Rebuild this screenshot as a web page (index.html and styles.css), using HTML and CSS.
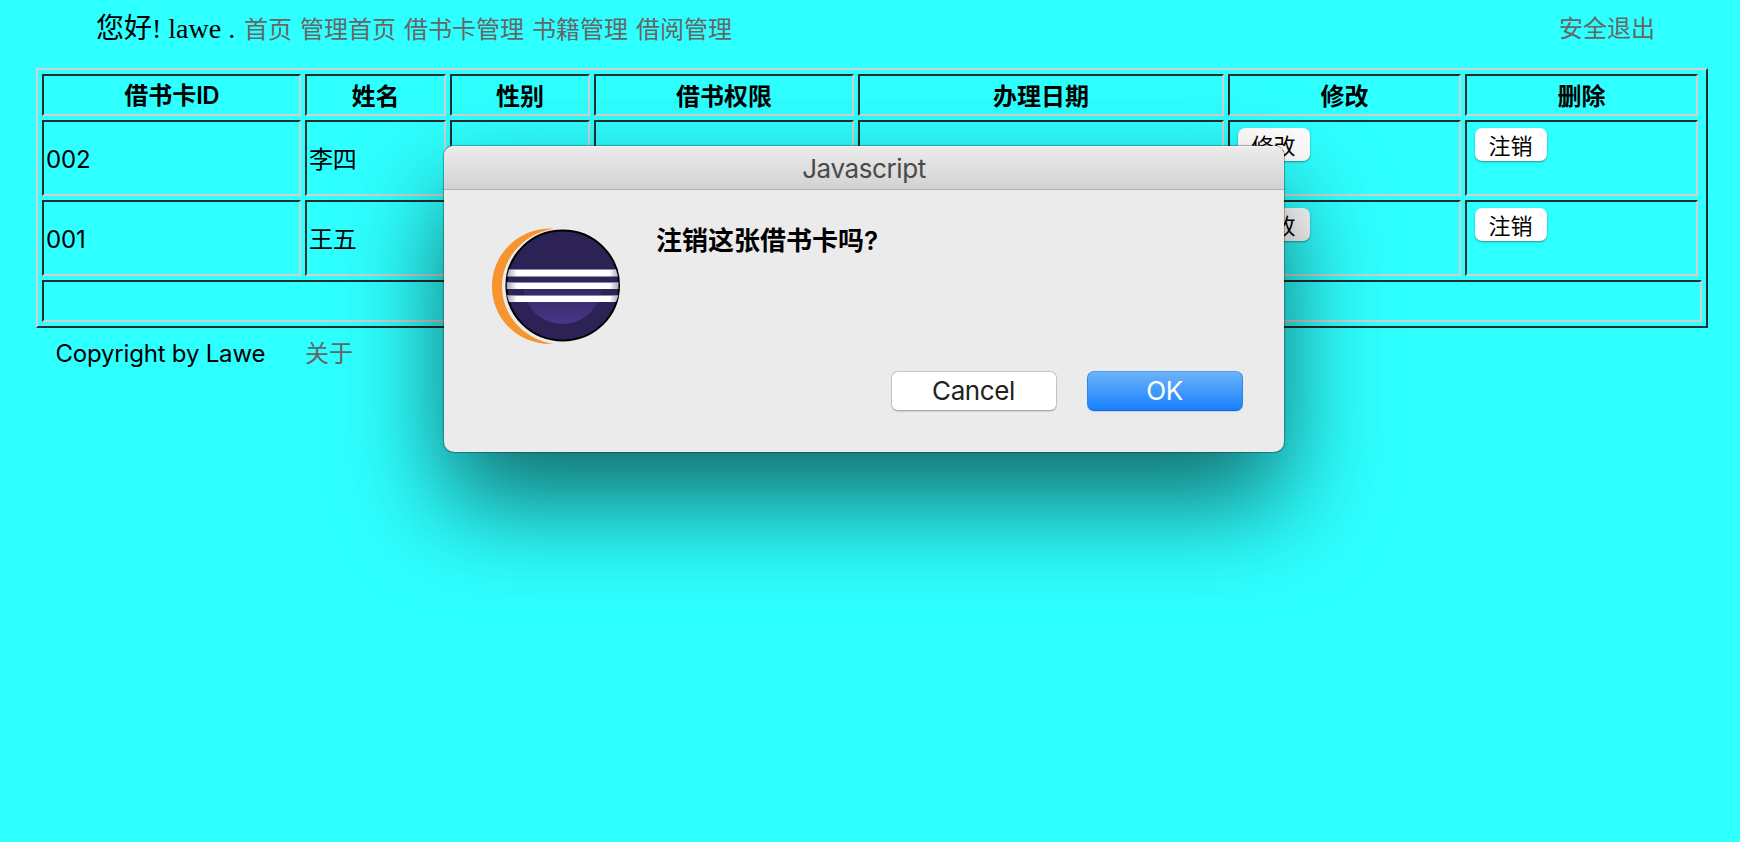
FILE: index.html
```html
<!DOCTYPE html>
<html lang="zh-CN">
<head>
<meta charset="utf-8">
<title>借书卡管理</title>
<link rel="stylesheet" href="styles.css">
</head>
<body>
<header class="topbar">
  <span class="greeting">您好! lawe .</span>
  <nav class="nav">
    <a>首页</a><a>管理首页</a><a>借书卡管理</a><a>书籍管理</a><a>借阅管理</a>
  </nav>
  <a class="logout">安全退出</a>
</header>
<main class="cards">
  <div class="cell head"><span>借书卡<span class="latin">ID</span></span></div><div class="cell head">姓名</div><div class="cell head">性别</div><div class="cell head">借书权限</div><div class="cell head">办理日期</div><div class="cell head">修改</div><div class="cell head">删除</div>
  <div class="cell">002</div><div class="cell">李四</div><div class="cell"></div><div class="cell"></div><div class="cell"></div><div class="cell action"><button class="btn">修改</button></div><div class="cell action"><button class="btn">注销</button></div>
  <div class="cell">001</div><div class="cell">王五</div><div class="cell"></div><div class="cell"></div><div class="cell"></div><div class="cell action"><button class="btn">修改</button></div><div class="cell action"><button class="btn">注销</button></div>
  <div class="cell pager"></div>
</main>
<footer class="footer"><span class="copyright">Copyright by Lawe</span><a>关于</a></footer>

<section class="dialog">
  <div class="title">Javascript</div>
  <div class="content">
    <svg class="logo" viewBox="0 0 130 118" width="130" height="118">
      <defs>
        <linearGradient id="inner" x1="0" y1="0" x2="0" y2="1"><stop offset="0.35" stop-color="#2c2255"/><stop offset="1" stop-color="#473788"/></linearGradient>
        <linearGradient id="bar" x1="0" x2="1"><stop offset="0" stop-color="#aaa3bd"/><stop offset="0.09" stop-color="#fff"/><stop offset="0.92" stop-color="#fff"/><stop offset="1" stop-color="#aaa3bd"/></linearGradient>
      </defs>
      <path d="M62 0.5C28-1.500 0 25 0 58.500S28 118 62 116C34 112 10 89 10 58.500S34 5 62 0.500Z" fill="#f7942d"/>
      <ellipse cx="70.700" cy="57.500" rx="56.300" ry="55" fill="#2c2255" stroke="#000" stroke-width="2"/>
      <circle cx="70.500" cy="56.500" r="39.500" fill="url(#inner)"/>
      <path d="M17 41.500H124L126 48.500H15ZM14.800 54.500H126.500V61H14.800ZM15 67.500H126.500L124 74H17Z" fill="url(#bar)"/>
      <path d="M17 41.500H124M15 54.500H126.500M15 67.500H126" stroke="#8f84ad" stroke-width="1"/>
    </svg>
    <p class="message">注销这张借书卡吗?</p>
  </div>
  <div class="buttons"><button class="cancel">Cancel</button><button class="ok">OK</button></div>
</section>
</body>
</html>
```
FILE: styles.css
```css
* { box-sizing: border-box; }
body {
  margin: 0;
  height: 842px;
  overflow: hidden;
  background: #2effff;
  color: #000;
  font: 24px/36px "Liberation Sans", "Noto Sans CJK SC", sans-serif;
}
a { color: #666; }
.topbar {
  display: flex;
  align-items: center;
  height: 68px;
  padding: 0 85px 9px 96px;
}
.greeting {
  width: 148px;
  padding-bottom: 2px;
  white-space: nowrap;
  font: 28px/36px "Liberation Serif", "Noto Sans CJK SC", serif;
}
.nav { display: flex; gap: 8px; }
.logout { margin-left: auto; padding-bottom: 2px; }
.cards {
  display: grid;
  grid-template-columns: 259px 141px 140px 260px 366px 233px 233px;
  grid-template-rows: 42px 76px 76px 42px;
  gap: 4px;
  width: 1672px;
  height: 260px;
  margin-left: 36px;
  padding: 4px;
  border: 2px solid;
  border-color: #d0d0d0 #2c2c2c #2c2c2c #d0d0d0;
}
.cell {
  display: flex;
  align-items: center;
  padding: 6px 2px 2px;
  border: 2px solid;
  border-color: #2c2c2c #d0d0d0 #d0d0d0 #2c2c2c;
  font-family: Inter, "Noto Sans CJK SC", sans-serif;
  font-size: 24px;
  letter-spacing: -.2px;
}
.head {
  justify-content: center;
  padding: 0 2px 1px;
  font-family: "Noto Sans CJK SC", sans-serif;
  font-weight: 700;
  letter-spacing: 0;
}
.latin { font-family: Inter, sans-serif; font-weight: 600; letter-spacing: -.7px; }
.action { align-items: flex-start; padding: 6px 7.5px; letter-spacing: 0; }
.pager { grid-column: 1 / -1; margin-right: -4px; }
.btn {
  width: 72px;
  height: 33px;
  padding: 0 0 2px;
  border: 0;
  border-radius: 7px;
  background: #fff;
  box-shadow: 0 1px 2px rgba(0, 0, 0, .4);
  color: #000;
  font: 22px/30px "Noto Sans CJK SC", sans-serif;
}
.footer {
  display: flex;
  padding: 8px 0 0 55.5px;
}
.copyright { width: 249.5px; font-family: Inter, sans-serif; letter-spacing: -.2px; }
.dialog {
  position: absolute;
  left: 444px;
  top: 146px;
  width: 840px;
  height: 306px;
  border-radius: 10px;
  background: #ebebeb;
  box-shadow: 0 0 1px 1px rgba(0, 0, 0, .3), 0 50px 100px rgba(0, 0, 0, .58);
  font-family: Inter, "Noto Sans CJK SC", sans-serif;
}
.title {
  height: 44px;
  border-bottom: 1px solid #b1b1b1;
  border-radius: 10px 10px 0 0;
  background: linear-gradient(#ececec, #d2d2d2);
  box-shadow: inset 0 1px #f6f6f6;
  color: #4a4a4a;
  font-size: 26px;
  letter-spacing: -.4px;
  line-height: 46px;
  text-align: center;
}
.content { display: flex; padding: 38px 0 0 48px; }
.message {
  margin: -5px 0 0 34px;
  font-size: 26px;
  font-weight: 600;
}
.buttons {
  display: flex;
  justify-content: flex-end;
  gap: 30px;
  padding: 25px 41px 0 0;
}
.buttons button {
  height: 40px;
  padding: 0 1px 0 0;
  border: 1px solid #c4c4c4;
  border-bottom-color: #aaa;
  border-radius: 7px;
  background: #fff;
  box-shadow: 0 1px 1px rgba(0, 0, 0, .12);
  color: #222;
  font: 26px/36px Inter, sans-serif;
  letter-spacing: -.4px;
}
.buttons .cancel { width: 166px; }
.buttons .ok {
  width: 156px;
  border-color: #4b9df4 #2f83f5 #1264f7;
  background: linear-gradient(#6db3f8, #1780ff);
  color: #fff;
}
```
